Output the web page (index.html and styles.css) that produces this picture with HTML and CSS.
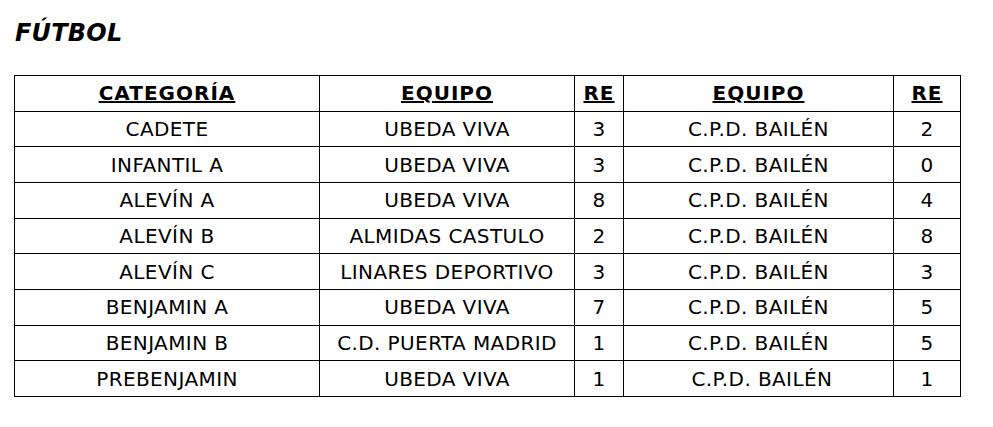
FILE: index.html
```html
<!DOCTYPE html>
<html lang="es">
<head>
<meta charset="utf-8">
<title>Fútbol</title>
<link rel="stylesheet" href="styles.css">
</head>
<body>
<div class="page">
  <h2 class="title">FÚTBOL</h2>
  <table class="results">
    <colgroup>
      <col class="c-cat">
      <col class="c-team">
      <col class="c-re">
      <col class="c-team2">
      <col class="c-re2">
    </colgroup>
    <thead>
      <tr><th>CATEGORÍA</th><th>EQUIPO</th><th>RE</th><th>EQUIPO</th><th>RE</th></tr>
    </thead>
    <tbody>
      <tr><td>CADETE</td><td>UBEDA VIVA</td><td>3</td><td>C.P.D. BAILÉN</td><td>2</td></tr>
      <tr><td>INFANTIL A</td><td>UBEDA VIVA</td><td>3</td><td>C.P.D. BAILÉN</td><td>0</td></tr>
      <tr><td>ALEVÍN A</td><td>UBEDA VIVA</td><td>8</td><td>C.P.D. BAILÉN</td><td>4</td></tr>
      <tr><td>ALEVÍN B</td><td>ALMIDAS CASTULO</td><td>2</td><td>C.P.D. BAILÉN</td><td>8</td></tr>
      <tr><td>ALEVÍN C</td><td>LINARES DEPORTIVO</td><td>3</td><td>C.P.D. BAILÉN</td><td>3</td></tr>
      <tr><td>BENJAMIN A</td><td>UBEDA VIVA</td><td>7</td><td>C.P.D. BAILÉN</td><td>5</td></tr>
      <tr><td>BENJAMIN B</td><td>C.D. PUERTA MADRID</td><td>1</td><td>C.P.D. BAILÉN</td><td>5</td></tr>
      <tr><td>PREBENJAMIN</td><td>UBEDA VIVA</td><td>1</td><td>&nbsp;C.P.D. BAILÉN</td><td>1</td></tr>
    </tbody>
  </table>
</div>
</body>
</html>
```
FILE: styles.css
```css
html, body {
  margin: 0;
  padding: 0;
  background: #ffffff;
}
.page {
  padding: 20px 0 0 14px;
  font-family: "DejaVu Sans", Verdana, sans-serif;
  color: #000000;
}
.title {
  margin: 0 0 29px 1px;
  font-size: 24px;
  line-height: 26px;
  font-weight: bold;
  font-style: italic;
  letter-spacing: 0.2px;
}
.results {
  border-collapse: collapse;
  table-layout: fixed;
  width: 946px;
  font-size: 20px;
}
.c-cat { width: 305px; }
.c-team { width: 255px; }
.c-re { width: 49px; }
.c-team2 { width: 270px; }
.c-re2 { width: 67px; }
.results th,
.results td {
  border: 1px solid #000000;
  height: 34.67px;
  padding: 0;
  text-align: center;
  vertical-align: middle;
  white-space: nowrap;
  line-height: 22px;
}
.results th {
  font-weight: bold;
  text-decoration: underline;
  letter-spacing: 1px;
}
.results td {
  font-weight: normal;
  letter-spacing: 0.4px;
}
```
